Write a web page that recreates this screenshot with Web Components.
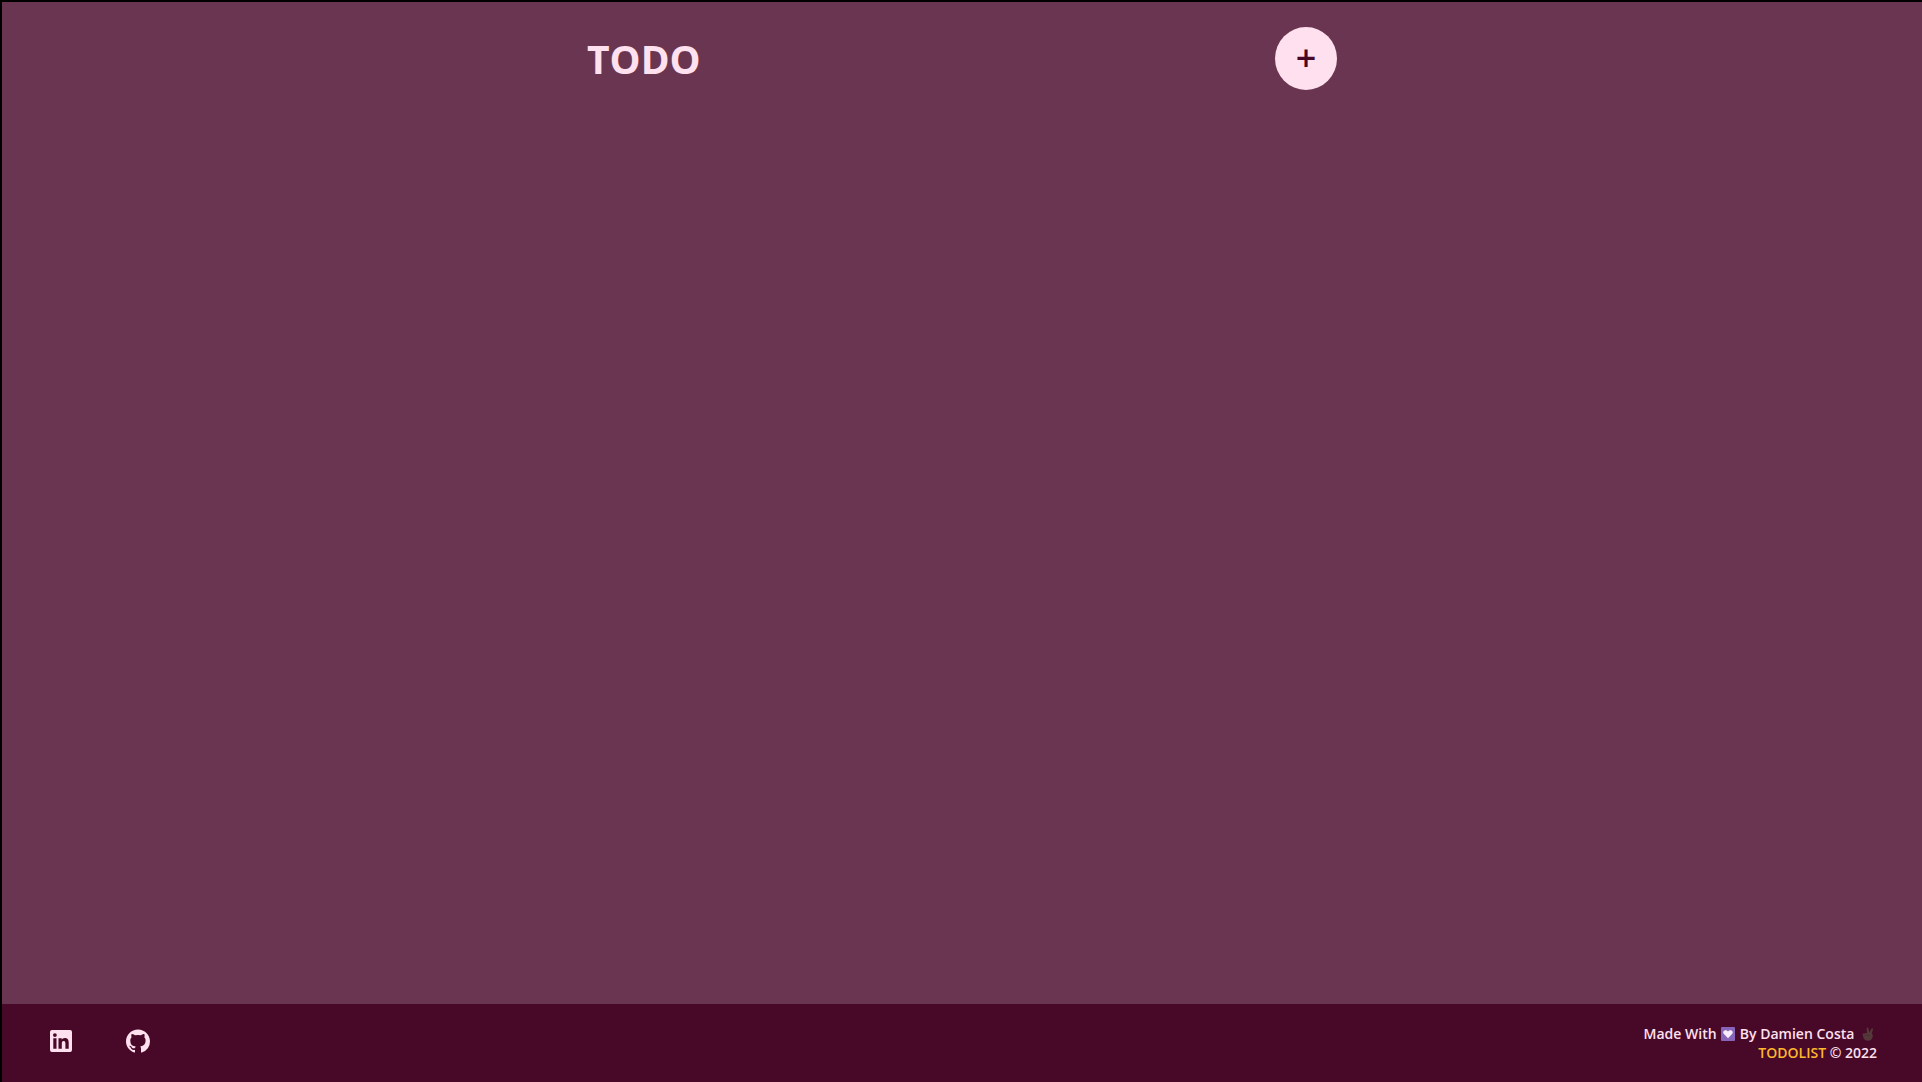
<!DOCTYPE html>
<html lang="en">
<head>
<meta charset="utf-8">
<meta name="viewport" content="width=device-width, initial-scale=1">
<title>TODO</title>
<style>
html { height: 100%; }
body {
  --plum: #6a3551; --wine: #480929; --blush: #ffe0ee; --gold: #ffb62e;
  margin: 0; min-height: 100%; display: flex; box-sizing: border-box;
  border: solid #000; border-width: 2px 0 0 2px;
  background: var(--plum); color: var(--blush);
  font-family: "Open Sans", "Noto Sans", sans-serif;
}
</style>
</head>
<body>
<todo-app></todo-app>
<script>
const define = (name, html) => {
  const template = document.createElement('template');
  template.innerHTML = html;
  customElements.define(name, class extends HTMLElement {
    constructor() {
      super();
      this.attachShadow({ mode: 'open' }).append(template.content.cloneNode(true));
    }
  });
};

define('todo-header', `
<style>
:host { display: flex; justify-content: space-between; align-items: center; width: 100%; max-width: 750px; margin: 0 auto; padding: 25px 0; }
h1 { margin: 0; font-size: 39px; line-height: 60px; font-weight: 700; }
button { display: flex; align-items: center; justify-content: center; width: 62px; height: 63px; padding: 0 0 2px; border: 0; border-radius: 50%; background: var(--blush); color: var(--wine); font: 650 36px/60px "Open Sans", sans-serif; cursor: pointer; }
</style>
<h1><slot></slot></h1>
<button type="button" aria-label="Add a task">+</button>`);

define('icon-linkedin', `
<style>:host, svg { display: block; }</style>
<svg width="24" height="24" viewBox="0 0 24 24" fill="currentColor" aria-hidden="true"><path fill-rule="evenodd" d="M3 1h18a2 2 0 0 1 2 2v18a2 2 0 0 1-2 2H3a2 2 0 0 1-2-2V3a2 2 0 0 1 2-2zM4.3 9.3v10.4h3.2V9.3zM5.9 4.2a1.9 1.9 0 1 0 0 3.800 1.900 1.900 0 0 0 0-3.800zM9.500 9.300v10.400h3.300v-5.100c0-1.400.300-2.700 1.900-2.700s1.700 1.500 1.700 2.800v5h3.300V14c0-2.800-.600-5-3.900-5-1.600 0-2.600.900-3.100 1.700V9.300z"/></svg>`);

define('icon-github', `
<style>:host, svg { display: block; }</style>
<svg width="24" height="24" viewBox="0 0 24 24" fill="currentColor" aria-hidden="true"><path d="M12 .5C5.4.5 0 5.8 0 12.3c0 5.2 3.4 9.6 8.2 11.2.6.1.8-.3.8-.6v-2c-3.3.7-4-1.6-4-1.6-.6-1.4-1.4-1.8-1.4-1.8-1-.7.1-.7.1-.7 1.2 0 1.9 1.2 1.9 1.2 1 1.8 2.8 1.3 3.5 1 0-.8.4-1.3.7-1.6-2.7-.3-5.5-1.3-5.5-6 0-1.2.5-2.3 1.3-3.1-.2-.4-.6-1.6 0-3.2 0 0 1-.3 3.4 1.2a11.5 11.5 0 0 1 6 0c2.3-1.5 3.3-1.2 3.3-1.2.6 1.6.2 2.8 0 3.2.9.8 1.3 1.9 1.3 3.2 0 4.6-2.8 5.6-5.5 5.9.5.4.9 1 .9 2.2v3.3c0 .3.1.7.8.6A12 12 0 0 0 24 12.3C24 5.8 18.6.5 12 .5z"/></svg>`);

define('icon-heart', `
<style>:host { display: inline-block; vertical-align: -2px; margin: 0 1px; } svg { display: block; }</style>
<svg width="14" height="14" viewBox="0 0 15 15" role="img" aria-label="heart"><rect width="15" height="15" rx="1" fill="#8764b8"/><path fill="#f7ecf8" d="M7.5 12 3.4 7.9C1.6 6 2.4 3.5 4.7 3.4c1.2 0 2.1.5 2.8 1.4.7-.9 1.6-1.4 2.8-1.4 2.3.1 3.1 2.6 1.3 4.5z"/></svg>`);

define('icon-victory', `
<style>:host { display: inline-block; vertical-align: -2px; margin: 0 2px 0 4px; } svg { display: block; }</style>
<svg width="13" height="14" viewBox="0 0 14 15" role="img" aria-label="victory hand"><path fill="#553839" d="M4.9 1.4C5.4.2 6.8.5 7 1.6l1 4.2L9.9 2c.7-1.2 2.2-.6 1.9.7L10.5 7c1.2 1 1.4 2.6.8 4.2-.8 2.3-2.4 3.5-5 3.5-2.5 0-4.2-1.5-4.9-3.7L.8 8.3c0-1.6 1.5-2 2.5-1.3.5-.5 1.5-.6 2.2-.2z"/><path d="M3.3 8v1.7M5.7 8v1.6l3-.6" fill="none" stroke="#452b30" stroke-width=".7"/></svg>`);

define('todo-footer', `
<style>
:host { display: flex; align-items: center; justify-content: space-between; box-sizing: border-box; padding: 20px 45px 20px 47px; background: var(--wine); }
nav { display: flex; gap: 53px; padding-bottom: 4px; }
a { color: inherit; text-decoration: none; }
nav a { display: block; }
p { margin: 0; text-align: right; font-size: 14px; line-height: 19px; font-weight: 650; }
.brand { color: var(--gold); }
</style>
<nav aria-label="Social links">
<a href="#linkedin" aria-label="LinkedIn"><icon-linkedin></icon-linkedin></a>
<a href="#github" aria-label="GitHub"><icon-github></icon-github></a>
</nav>
<p>Made With <icon-heart></icon-heart> By Damien Costa <icon-victory></icon-victory><br><a class="brand" href="#home">TODOLIST</a> © 2022</p>`);

define('todo-app', `
<style>
:host { display: flex; flex-direction: column; flex: 1; min-width: 0; }
main { flex: 1; }
</style>
<main><todo-header>TODO</todo-header></main>
<todo-footer></todo-footer>`);
</script>
</body>
</html>
